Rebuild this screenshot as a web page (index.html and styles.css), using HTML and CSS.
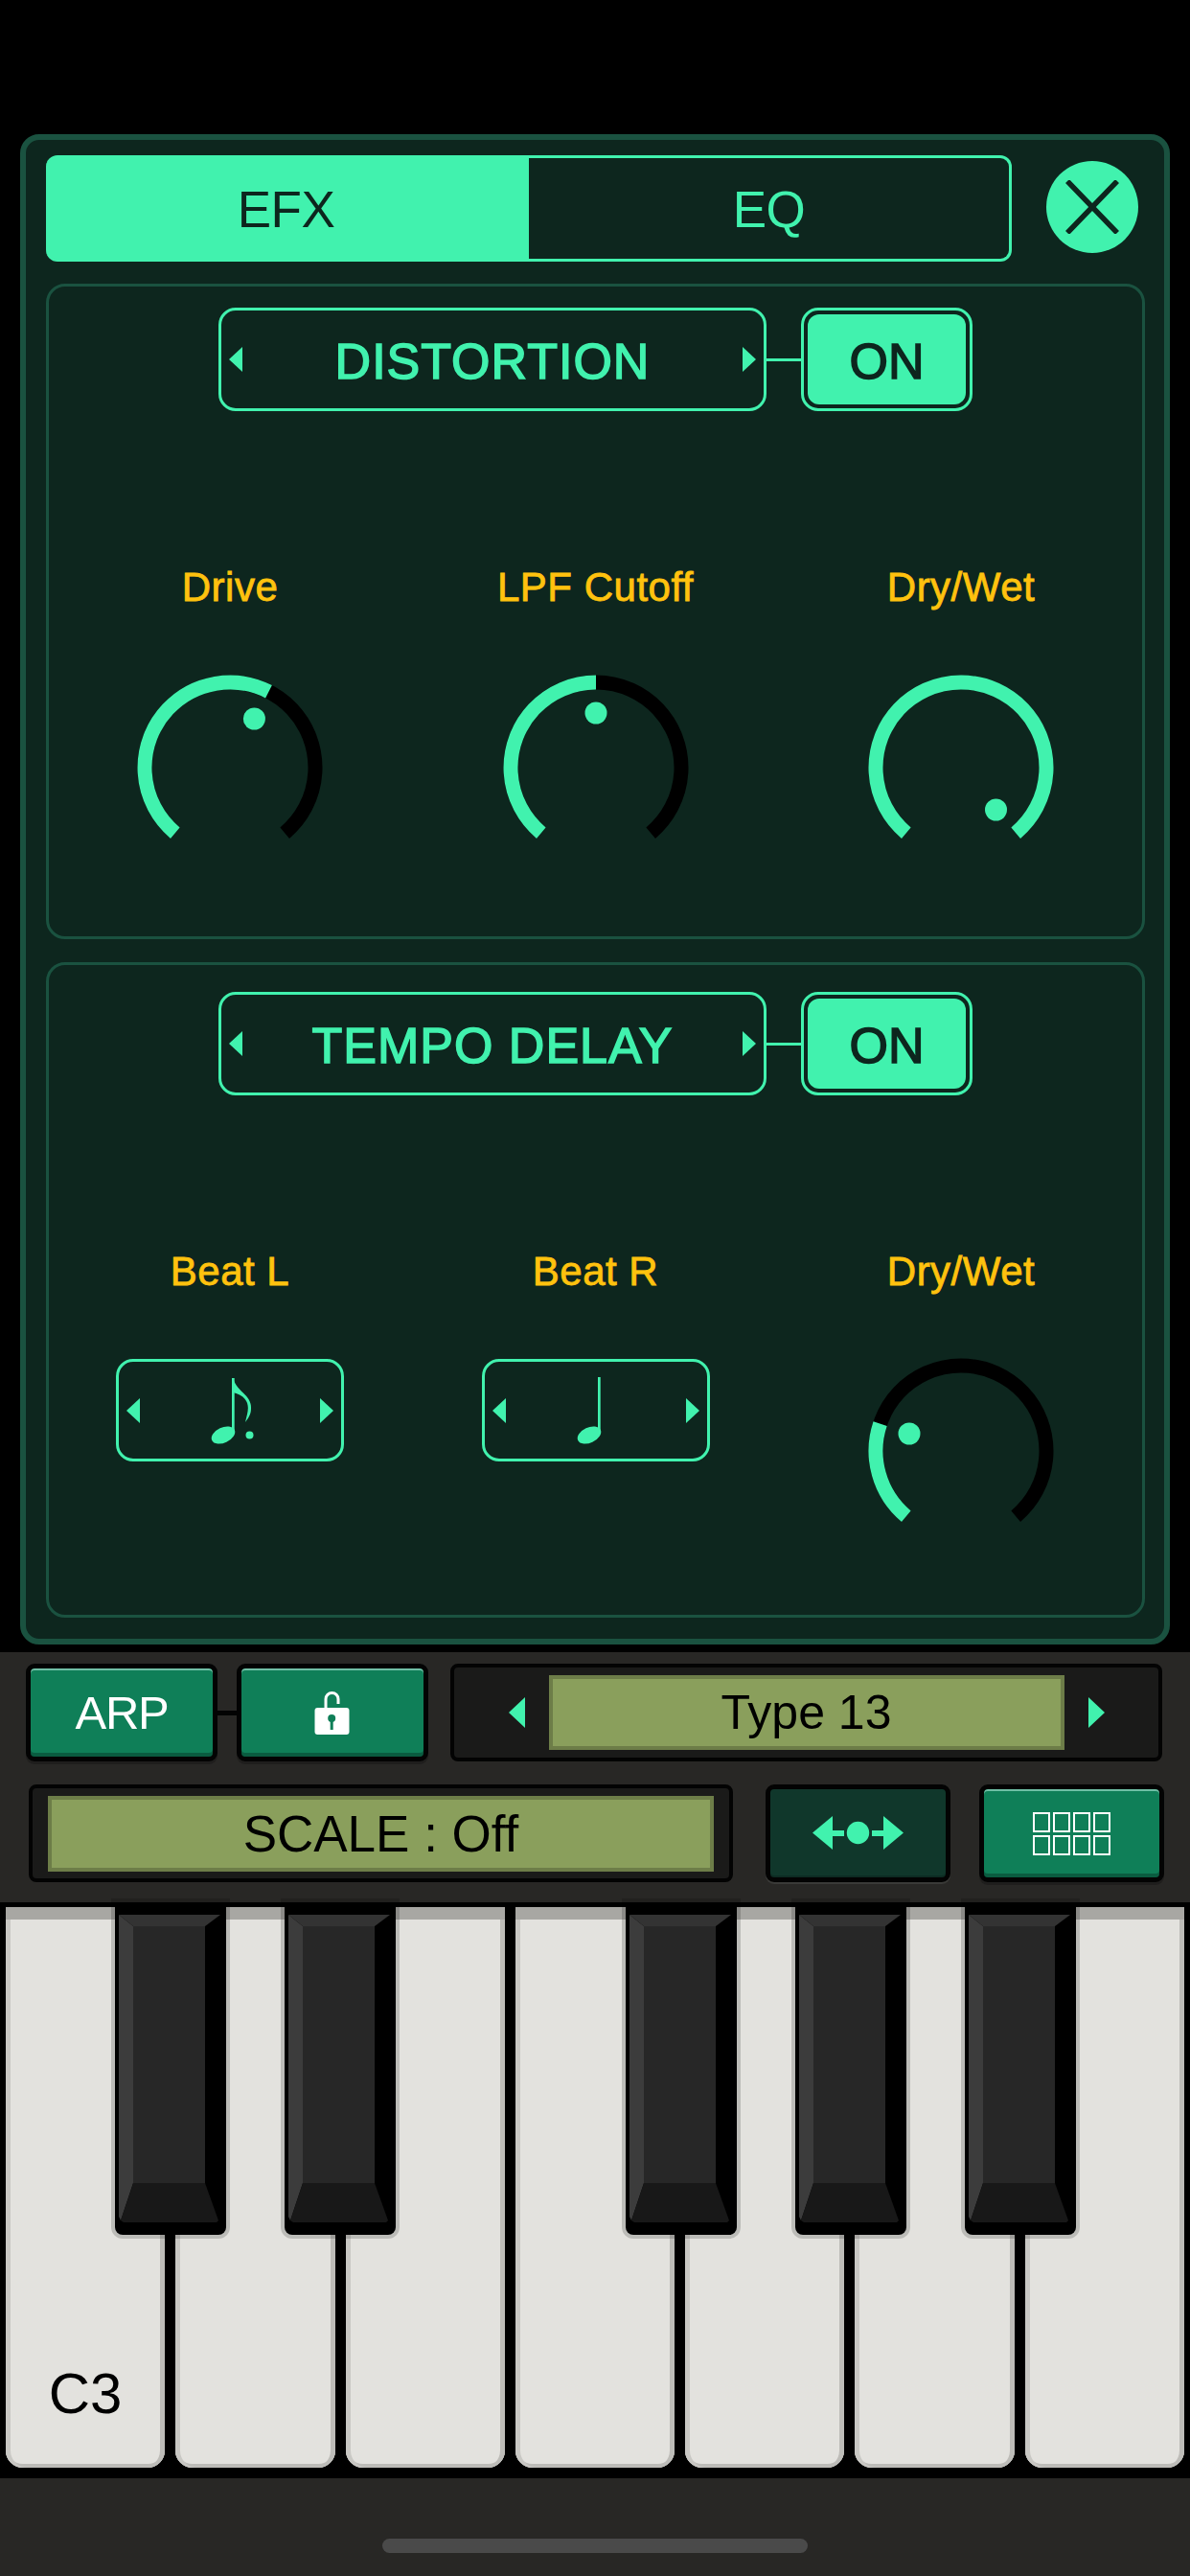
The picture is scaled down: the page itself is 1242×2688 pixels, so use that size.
FILE: index.html
```html
<!DOCTYPE html>
<html lang="en">
<head>
<meta charset="UTF-8">
<meta name="viewport" content="width=device-width, initial-scale=1.0">
<title>Synth Effects</title>
<link rel="stylesheet" href="styles.css">
</head>
<body>

<svg class="defs" width="0" height="0">
  <symbol id="black-key" viewBox="0 0 116 347">
    <polygon points="19,25 94,25 94,293 19,293" fill="#272727"/>
    <polygon points="4,13 110,13 94,25 19,25" fill="#333333"/>
    <polygon points="4,13 19,25 19,293 6,332 4,328" fill="#3c3c3c"/>
    <polygon points="19,293 94,293 108,332 106,334 9,334 6,332" fill="#181818"/>
  </symbol>
</svg>

<div class="efx-panel">
  <div class="panel-head">
    <div class="tabs">
      <div class="tab tab-on">EFX</div>
      <div class="tab">EQ</div>
    </div>
    <div class="close-btn">
      <svg width="56" height="56" viewBox="0 0 56 56"><path d="M2 1 L54 55 M54 1 L2 55" stroke="#0d261e" stroke-width="5.5" fill="none"/></svg>
    </div>
  </div>

  <div class="fx-section">
    <div class="fx-head">
      <div class="selector">
        <span class="arrow arrow-l"></span>
        <span class="selector-name">DISTORTION</span>
        <span class="arrow arrow-r"></span>
      </div>
      <span class="connector"></span>
      <div class="on-btn"><span class="on-fill">ON</span></div>
    </div>
    <div class="fx-params">
      <div class="param">
        <div class="param-label">Drive</div>
        <svg class="knob" width="200" height="180" viewBox="0 0 200 180">
          <path class="knob-track" d="M42.8 168.18 A89 89 0 1 1 157.2 168.18"/>
          <path class="knob-value" d="M42.8 168.18 A89 89 0 1 1 157.2 168.18" pathLength="280" stroke-dasharray="167 280"/>
          <circle class="knob-dot" cx="125.4" cy="49" r="11.5"/>
        </svg>
      </div>
      <div class="param">
        <div class="param-label">LPF Cutoff</div>
        <svg class="knob" width="200" height="180" viewBox="0 0 200 180">
          <path class="knob-track" d="M42.8 168.18 A89 89 0 1 1 157.2 168.18"/>
          <path class="knob-value" d="M42.8 168.18 A89 89 0 1 1 157.2 168.18" pathLength="280" stroke-dasharray="140 280"/>
          <circle class="knob-dot" cx="100" cy="43" r="11.5"/>
        </svg>
      </div>
      <div class="param">
        <div class="param-label">Dry/Wet</div>
        <svg class="knob" width="200" height="180" viewBox="0 0 200 180">
          <path class="knob-value" d="M42.8 168.18 A89 89 0 1 1 157.2 168.18"/>
          <circle class="knob-dot" cx="136.5" cy="144" r="11.5"/>
        </svg>
      </div>
    </div>
  </div>

  <div class="fx-section fx-section-delay">
    <div class="fx-head">
      <div class="selector">
        <span class="arrow arrow-l"></span>
        <span class="selector-name">TEMPO DELAY</span>
        <span class="arrow arrow-r"></span>
      </div>
      <span class="connector"></span>
      <div class="on-btn"><span class="on-fill">ON</span></div>
    </div>
    <div class="fx-params">
      <div class="param">
        <div class="param-label">Beat L</div>
        <div class="beat-box">
          <span class="arrow arrow-l"></span>
          <svg class="note" width="60" height="80" viewBox="0 0 60 80">
            <ellipse cx="23" cy="65.5" rx="13" ry="8" transform="rotate(-25 23 65.5)"/>
            <rect x="32" y="6" width="2.7" height="58"/>
            <path d="M33 6 C37 20 53 24 52 38 C52 44 49 48 46 52 C48 44 50 38 48 32 C46 26 39 22 33 21 Z"/>
            <circle cx="50.5" cy="65.5" r="4"/>
          </svg>
          <span class="arrow arrow-r"></span>
        </div>
      </div>
      <div class="param">
        <div class="param-label">Beat R</div>
        <div class="beat-box">
          <span class="arrow arrow-l"></span>
          <svg class="note" width="60" height="80" viewBox="0 0 60 80">
            <ellipse cx="23" cy="65.5" rx="13" ry="8" transform="rotate(-25 23 65.5)"/>
            <rect x="32" y="5" width="2.7" height="59"/>
          </svg>
          <span class="arrow arrow-r"></span>
        </div>
      </div>
      <div class="param">
        <div class="param-label">Dry/Wet</div>
        <svg class="knob knob-low" width="200" height="180" viewBox="0 0 200 180">
          <path class="knob-track" d="M42.8 168.18 A89 89 0 1 1 157.2 168.18"/>
          <path class="knob-value" d="M42.8 168.18 A89 89 0 1 1 157.2 168.18" pathLength="280" stroke-dasharray="68.5 280"/>
          <circle class="knob-dot" cx="46" cy="82" r="11.5"/>
        </svg>
      </div>
    </div>
  </div>
</div>

<div class="controls">
  <div class="ctl-row ctl-row-top">
    <div class="hw-btn">ARP</div>
    <span class="hw-link"></span>
    <div class="hw-btn">
      <svg width="40" height="48" viewBox="0 0 40 48">
        <path d="M13 20 V10 A6.5 6.5 0 0 1 26 10 V15" fill="none" stroke="#fff" stroke-width="3"/>
        <rect x="1.5" y="19" width="36" height="28" rx="3" fill="#fff"/>
        <circle cx="19.2" cy="30" r="4" fill="#0f7f58"/>
        <rect x="17.7" y="30" width="3" height="12" fill="#0f7f58"/>
      </svg>
    </div>
    <div class="lcd-box lcd-box-type">
      <span class="arrow arrow-l arrow-lg"></span>
      <div class="lcd lcd-type">Type 13</div>
      <span class="arrow arrow-r arrow-lg"></span>
    </div>
  </div>
  <div class="ctl-row ctl-row-bottom">
    <div class="lcd-box lcd-box-scale">
      <div class="lcd lcd-scale">SCALE : Off</div>
    </div>
    <div class="hw-btn hw-btn-dark">
      <svg width="95" height="36" viewBox="0 0 95 36" fill="#41f2ae">
        <polygon points="0,17.5 21,0 21,35"/>
        <rect x="21" y="15" width="12" height="6"/>
        <circle cx="47.5" cy="17.5" r="11.7"/>
        <rect x="62" y="15" width="12" height="6"/>
        <polygon points="95,17.5 74,0 74,35"/>
      </svg>
    </div>
    <div class="hw-btn hw-btn-grid">
      <div class="grid-icon">
        <span></span><span></span><span></span><span></span>
        <span></span><span></span><span></span><span></span>
      </div>
    </div>
  </div>
</div>

<div class="keyboard">
  <div class="white-keys">
    <div class="white-key"><span class="key-name">C3</span></div>
    <div class="white-key"></div>
    <div class="white-key"></div>
    <div class="white-key"></div>
    <div class="white-key"></div>
    <div class="white-key"></div>
    <div class="white-key"></div>
  </div>
  <svg class="black-key bk-1" width="116" height="347"><use href="#black-key"/></svg>
  <svg class="black-key bk-2" width="116" height="347"><use href="#black-key"/></svg>
  <svg class="black-key bk-3" width="116" height="347"><use href="#black-key"/></svg>
  <svg class="black-key bk-4" width="116" height="347"><use href="#black-key"/></svg>
  <svg class="black-key bk-5" width="116" height="347"><use href="#black-key"/></svg>
</div>

<div class="home-bar">
  <span class="home-pill"></span>
</div>

</body>
</html>
```

FILE: styles.css
```css
* {
  box-sizing: border-box;
}
body {
  margin: 0;
  width: 1242px;
  height: 2688px;
  overflow: hidden;
  background: #000;
  padding-top: 140px;
  font-family: "Liberation Sans", Arial, sans-serif;
}
.defs {
  position: absolute;
}

/* effects panel */
.efx-panel {
  margin: 0 21px;
  width: 1200px;
  height: 1576px;
  padding: 16px 21px 0;
  background: #0d261e;
  border: 6px solid #1a5240;
  border-radius: 20px;
}
.panel-head {
  display: flex;
  gap: 36px;
  height: 111px;
}
.tabs {
  display: flex;
  width: 1008px;
}
.tab {
  flex: 1;
  display: flex;
  align-items: center;
  justify-content: center;
  padding-top: 2px;
  font-size: 53px;
  letter-spacing: -0.5px;
  color: #41f2ae;
  border: 3px solid #41f2ae;
  border-left: none;
  border-radius: 0 12px 12px 0;
}
.tab-on {
  background: #41f2ae;
  color: #0d261e;
  border-radius: 12px 0 0 12px;
}
.close-btn {
  width: 96px;
  height: 96px;
  margin-top: 6px;
  border-radius: 50%;
  background: #41f2ae;
  display: flex;
  align-items: center;
  justify-content: center;
}
.fx-section {
  width: 1147px;
  height: 684px;
  margin-top: 23px;
  padding-top: 22px;
  border: 3px solid #1a5240;
  border-radius: 20px;
}
.fx-section-delay {
  margin-top: 24px;
  padding-top: 28px;
}
.fx-head {
  display: flex;
  align-items: center;
  justify-content: center;
}
.selector {
  width: 572px;
  height: 108px;
  padding: 0 8px;
  display: flex;
  align-items: center;
  justify-content: space-between;
  border: 3px solid #41f2ae;
  border-radius: 18px;
}
.selector-name {
  padding-top: 3px;
  font-size: 52px;
  letter-spacing: 1px;
  color: #41f2ae;
  -webkit-text-stroke: 1.5px #41f2ae;
}
.connector {
  width: 36px;
  height: 3px;
  background: #41f2ae;
}
.on-btn {
  width: 179px;
  height: 108px;
  padding: 4px;
  border: 3px solid #41f2ae;
  border-radius: 18px;
}
.on-fill {
  display: flex;
  align-items: center;
  justify-content: center;
  height: 100%;
  padding-top: 3px;
  background: #41f2ae;
  border-radius: 12px;
  font-size: 52px;
  color: #0d261e;
  -webkit-text-stroke: 1.5px #0d261e;
}
.arrow {
  width: 0;
  height: 0;
  border-top: 13px solid transparent;
  border-bottom: 13px solid transparent;
}
.arrow-l {
  border-right: 14px solid #41f2ae;
}
.arrow-r {
  border-left: 14px solid #41f2ae;
}
.arrow-lg {
  border-top-width: 16px;
  border-bottom-width: 16px;
  border-left-width: 17px;
  border-right-width: 17px;
}
.arrow-lg.arrow-l {
  border-left-width: 0;
}
.arrow-lg.arrow-r {
  border-right-width: 0;
}
.fx-params {
  display: grid;
  grid-template-columns: repeat(3, 381.5px);
  justify-content: center;
  margin-top: 162px;
}
.param {
  display: flex;
  flex-direction: column;
  align-items: center;
}
.param-label {
  height: 44px;
  line-height: 44px;
  font-size: 42px;
  letter-spacing: 0.5px;
  color: #ffc20e;
  -webkit-text-stroke: 0.8px #ffc20e;
}
.knob {
  display: block;
  margin-top: 66px;
}
.knob-low {
  margin-top: 65px;
}
.knob-track,
.knob-value {
  fill: none;
  stroke-width: 15;
}
.knob-track {
  stroke: #000;
}
.knob-value {
  stroke: #41f2ae;
}
.knob-dot {
  fill: #41f2ae;
}
.beat-box {
  width: 238px;
  height: 107px;
  margin-top: 69px;
  padding: 0 8px;
  display: flex;
  align-items: center;
  justify-content: space-between;
  border: 3px solid #41f2ae;
  border-radius: 18px;
}
.note {
  fill: #41f2ae;
}

/* arp, type and scale controls */
.controls {
  height: 261px;
  margin-top: 8px;
  background: #282725;
}
.ctl-row {
  display: flex;
  align-items: center;
}
.ctl-row-top {
  height: 102px;
  margin-bottom: 24px;
  padding-left: 27px;
  position: relative;
  top: 12px;
}
.ctl-row-bottom {
  height: 102px;
  padding-left: 30px;
  gap: 34px;
  position: relative;
  top: 12px;
}
.hw-btn {
  width: 200px;
  height: 102px;
  display: flex;
  align-items: center;
  justify-content: center;
  background: #0f7f58;
  border: 5px solid #030303;
  border-radius: 9px;
  box-shadow: inset 0 2px 0 #6fbfa5, inset 0 -4px 0 #0a5c40, 0 3px 0 #1f1e1d;
  font-size: 49px;
  letter-spacing: -1.2px;
  color: #fff;
}
.hw-btn-dark,
.hw-btn-grid {
  width: 193px;
}
.hw-btn-dark {
  background: #10372b;
  box-shadow: inset 0 -2px 0 #0d2c23, 0 2px 0 #3a3a38;
}
.hw-btn-grid {
  margin-left: -4px;
}
.hw-link {
  width: 20px;
  height: 5px;
  background: #030303;
}
.lcd-box {
  height: 102px;
  display: flex;
  align-items: center;
  justify-content: center;
  background: #1a1a19;
  border: 4px solid #030303;
  border-radius: 8px;
}
.lcd-box-type {
  width: 743px;
  margin-left: 23px;
  gap: 25px;
}
.lcd-box-scale {
  width: 735px;
}
.lcd {
  display: flex;
  align-items: center;
  justify-content: center;
  background: #8a9f5c;
  border: 4px solid #6d7d48;
  color: #000;
}
.lcd-type {
  width: 538px;
  height: 78px;
  font-size: 50px;
}
.lcd-scale {
  width: 695px;
  height: 79px;
  font-size: 53px;
}
.grid-icon {
  display: grid;
  grid-template-columns: repeat(4, 18.5px);
  gap: 3px 2.5px;
}
.grid-icon span {
  height: 21px;
  border: 2px solid #fff;
}

/* keyboard */
.keyboard {
  position: relative;
  height: 601px;
  background: #000;
  padding-top: 5px;
}
.white-keys {
  display: flex;
  gap: 11px;
  padding: 0 6px;
}
.white-key {
  flex: 1;
  height: 585px;
  display: flex;
  align-items: flex-end;
  justify-content: center;
  padding-bottom: 47px;
  background: #e3e2de;
  border-top: 13px solid #a8a7a3;
  border-radius: 0 0 18px 18px;
  box-shadow: inset 5px 0 0 #c9c8c4, inset -5px 0 0 #bdbcb8, inset 0 -4px 0 #bdbcb8;
}
.key-name {
  font-size: 60px;
  line-height: 60px;
  color: #000;
}
.black-key {
  position: absolute;
  top: 0;
  background: #000;
  border-radius: 0 0 8px 8px;
  box-shadow: 0 0 0 4px rgba(0, 0, 0, 0.17);
}
.bk-1 { left: 120px; }
.bk-2 { left: 297px; }
.bk-3 { left: 653px; }
.bk-4 { left: 830px; }
.bk-5 { left: 1007px; }

.home-bar {
  height: 102px;
  padding-top: 63px;
  background: #282725;
  display: flex;
  justify-content: center;
  align-items: flex-start;
}
.home-pill {
  width: 444px;
  height: 15px;
  border-radius: 8px;
  background: #4a4a4a;
}
```
